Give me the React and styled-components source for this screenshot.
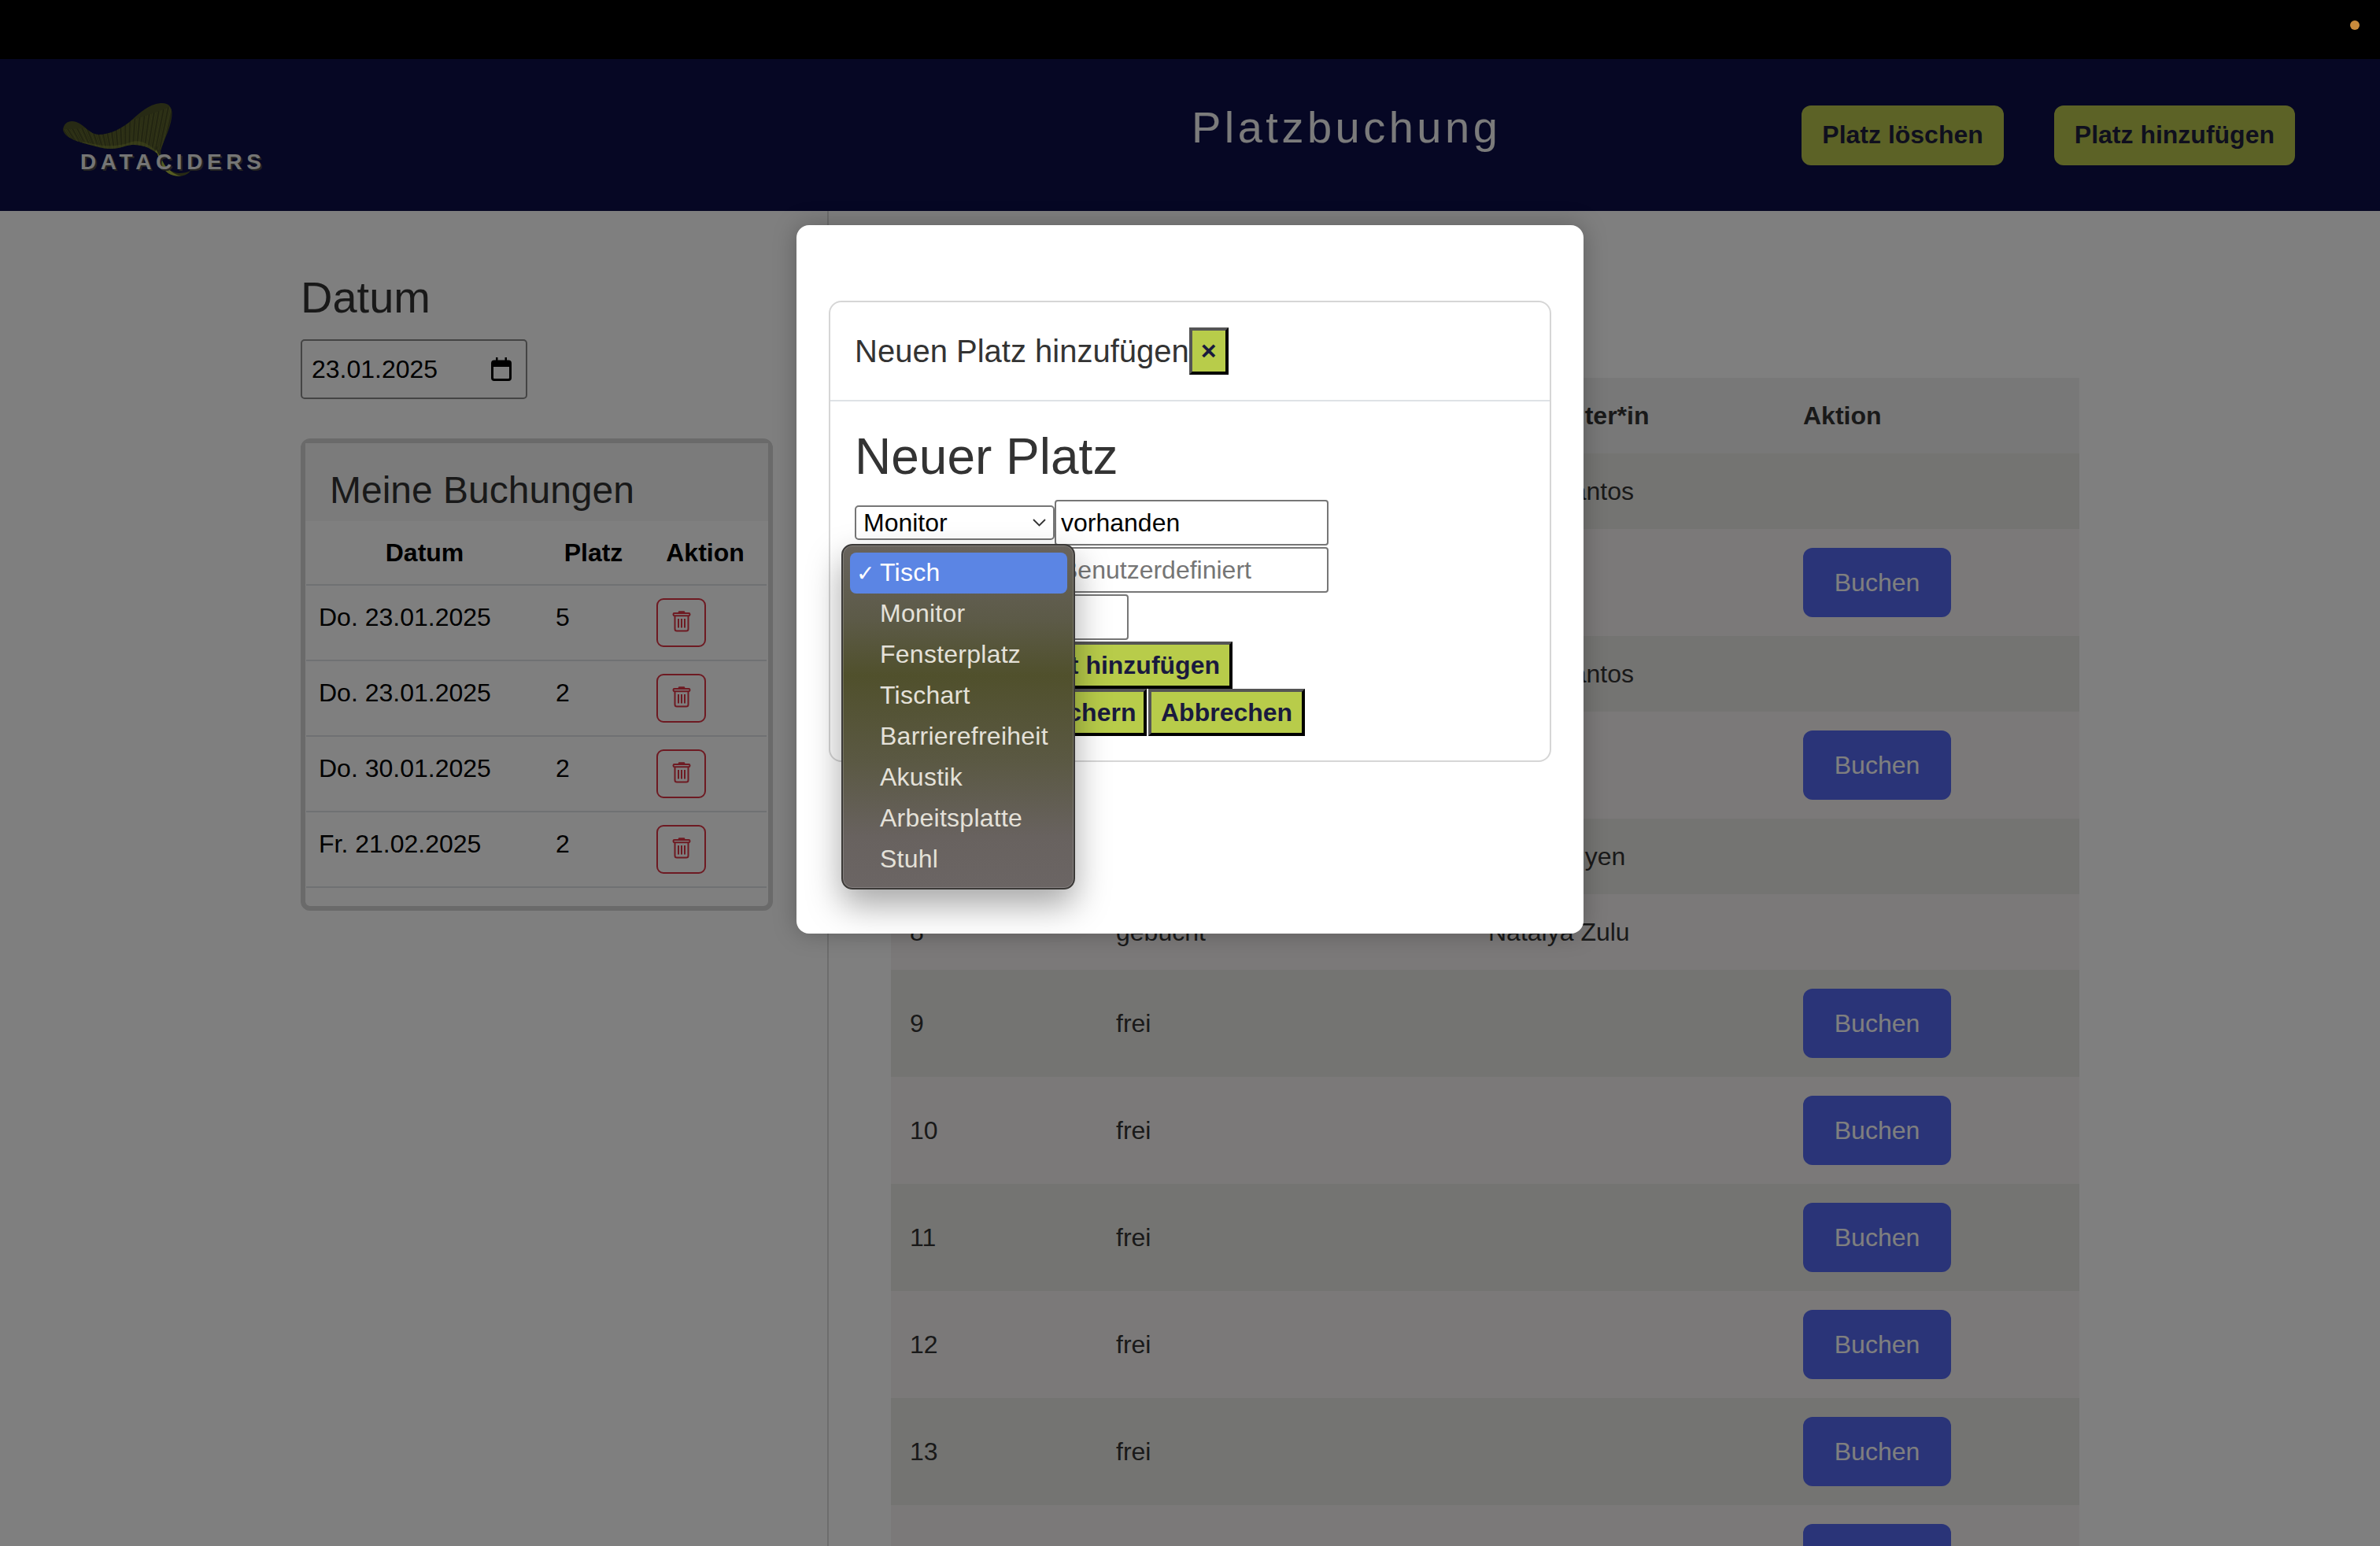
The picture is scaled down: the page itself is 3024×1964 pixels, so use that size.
import React from 'react'
import styled, { createGlobalStyle } from 'styled-components'

const GlobalStyle = createGlobalStyle`
  html, body {
    margin: 0;
    background: #fff;
  }
  body {
    width: 3024px;
    height: 1964px;
    overflow: hidden;
    font-family: "Liberation Sans", Arial, sans-serif;
    color: #333;
  }
  * {
    box-sizing: border-box;
  }
`

const Page = styled.div`
  position: relative;
  width: 3024px;
  height: 1964px;
  overflow: hidden;
  background: #fff;
`

const TopBar = styled.div`
  height: 75px;
  background: #000;
  display: flex;
  justify-content: flex-end;
  align-items: center;
  padding: 0 26px 11px 0;
`

const StatusDot = styled.span`
  width: 12px;
  height: 12px;
  border-radius: 50%;
  background: #c98b3c;
`

const Nav = styled.header`
  height: 193px;
  background: #0d0f48;
  display: flex;
  align-items: center;
  padding: 0 108px 0 80px;
`

const Logo = styled.div`
  position: relative;
  width: 256px;
  height: 95px;
  margin-top: 12px;
  margin-right: auto;
`

const LogoText = styled.span`
  position: absolute;
  left: 22px;
  top: 62px;
  font-size: 28px;
  line-height: 28px;
  font-weight: 700;
  letter-spacing: 5.6px;
  color: #eaeaea;
  text-shadow: 2px 2px 0 #444;
`

const NavTitle = styled.h1`
  margin: 0 382px 20px 0;
  font-size: 56px;
  font-weight: 400;
  line-height: 67px;
  letter-spacing: 4.5px;
  color: #f6f6f6;
`

const NavActions = styled.div`
  display: flex;
  gap: 64px;
`

const NavButton = styled.button`
  height: 76px;
  padding: 0 26px;
  border: 0;
  border-radius: 12px;
  background: #b8c44c;
  color: #1f1f3d;
  font: 700 32px "Liberation Sans", Arial, sans-serif;
`

const Content = styled.div`
  display: flex;
  height: 1696px;
`

const Aside = styled.aside`
  width: 1051px;
  padding: 76px 0 0 382px;
`

const DateHeading = styled.h2`
  margin: 0 0 20px;
  font-size: 56px;
  line-height: 67px;
  font-weight: 400;
  color: #333;
`

const DateField = styled.div`
  width: 288px;
  height: 76px;
  display: flex;
  align-items: center;
  justify-content: space-between;
  padding: 0 18px 0 12px;
  border: 2px solid #888;
  border-radius: 5px;
  font-size: 32px;
  color: #000;
`

const BookingCard = styled.section`
  width: 600px;
  height: 600px;
  margin-top: 50px;
  border: 6px solid #d4d4d4;
  border-radius: 12px;
`

const BookingHeader = styled.div`
  height: 99px;
  padding: 31px 31px 0;
  background: #f7f7f7;
`

const BookingTitle = styled.h3`
  margin: 0;
  font-size: 48px;
  line-height: 58px;
  font-weight: 400;
  color: #333;
`

const BookingTable = styled.table`
  width: 585px;
  margin: 0 1px;
  border-collapse: collapse;
  table-layout: fixed;
  color: #000;
  font-size: 32px;
  line-height: 48px;
`

const BookingHead = styled.th`
  width: ${(p) => p.$width}px;
  padding: 16px;
  font-weight: 700;
  text-align: center;
  border-bottom: 2px solid #dee2e6;
`

const BookingCell = styled.td`
  padding: 16px;
  vertical-align: top;
  border-bottom: 2px solid #dee2e6;
`

const TrashButton = styled.button`
  display: flex;
  justify-content: center;
  width: 63px;
  height: 62px;
  padding: 13px 0 0;
  background: transparent;
  border: 2px solid #dc3545;
  border-radius: 9px;
  color: #dc3545;
`

const Main = styled.main`
  flex: 1;
  padding: 212px 0 0 79px;
  border-left: 2px solid #dadada;
`

const SeatTable = styled.table`
  width: 1510px;
  border-collapse: collapse;
  table-layout: fixed;
  font-size: 32px;
  line-height: 48px;
  color: #333;
  thead tr {
    background: #f0f0f0;
  }
  tbody tr:nth-child(odd) {
    background: #e9e8e4;
  }
  tbody tr:nth-child(even) {
    background: #f6f3f3;
  }
`

const SeatHead = styled.th`
  width: ${(p) => p.$width}px;
  padding: 24px;
  text-align: left;
  font-weight: 700;
`

const SeatCell = styled.td`
  padding: 24px;
  vertical-align: middle;
`

const BookButton = styled.button`
  display: block;
  width: 188px;
  height: 88px;
  border: 0;
  border-radius: 12px;
  background: #5468f0;
  color: #fff;
  font: 400 32px "Liberation Sans", Arial, sans-serif;
`

const Backdrop = styled.div`
  position: absolute;
  inset: 75px 0 0 0;
  background: rgba(0, 0, 0, 0.5);
  display: flex;
  justify-content: center;
  align-items: flex-start;
  padding-top: 211px;
`

const Modal = styled.div`
  width: 1000px;
  height: 900px;
  padding: 96px 41px 0;
  background: #fff;
  border-radius: 16px;
  box-shadow: 0 0 30px rgba(0, 0, 0, 0.25);
`

const FormCard = styled.div`
  height: 586px;
  border: 2px solid #d6d6d6;
  border-radius: 16px;
`

const FormCardHeader = styled.div`
  display: flex;
  align-items: center;
  height: 126px;
  padding: 0 31px;
  border-bottom: 2px solid #dee2e6;
`

const FormCardTitle = styled.h5`
  margin: 0;
  font-size: 40px;
  line-height: 48px;
  font-weight: 400;
  color: #333;
`

const BevelButton = styled.button`
  height: 60px;
  padding: 0 12px;
  border-style: solid;
  border-width: 4px;
  border-color: #555 #000 #000 #555;
  background: #b8cc4a;
  color: #1a1a3e;
  font: 700 32px "Liberation Sans", Arial, sans-serif;
  white-space: nowrap;
  width: ${(p) => (p.$width ? `${p.$width}px` : 'auto')};
  text-align: ${(p) => (p.$width ? 'right' : 'center')};
`

const CloseButton = styled(BevelButton)`
  width: 50px;
  padding: 0 0 2px;
  font-size: 34px;
  line-height: 1;
  text-align: center;
`

const FormBody = styled.div`
  padding: 32px 31px 0;
`

const FormHeading = styled.h2`
  margin: 0 0 16px;
  font-size: 64px;
  line-height: 77px;
  font-weight: 400;
  color: #333;
`

const FormStack = styled.div`
  display: flex;
  flex-direction: column;
  align-items: flex-start;
  gap: 2px;
`

const FieldRow = styled.div`
  display: flex;
  align-items: center;
`

const SelectWrap = styled.div`
  position: relative;
`

const SelectField = styled.div`
  display: flex;
  align-items: center;
  justify-content: space-between;
  width: 254px;
  height: 44px;
  padding: 0 9px 0 9px;
  border: 2px solid #767676;
  border-radius: 5px;
  background: #fff;
  color: #000;
  font-size: 32px;
`

const TextInput = styled.input`
  width: ${(p) => p.$width}px;
  height: 58px;
  padding: 0 6px;
  border: 2px solid #767676;
  border-radius: 4px;
  background: #fff;
  color: #000;
  font: 400 32px "Liberation Sans", Arial, sans-serif;
  &::placeholder {
    color: #757575;
  }
`

const ButtonStack = styled.div`
  display: flex;
  flex-direction: column;
  align-items: flex-start;
`

const ButtonRow = styled.div`
  display: flex;
  gap: 2px;
`

const Popup = styled.ul`
  position: absolute;
  top: 49px;
  left: -17px;
  z-index: 2;
  width: 297px;
  height: 439px;
  margin: 0;
  padding: 9px 8px 0 9px;
  list-style: none;
  border: 2px solid #3c3a38;
  border-radius: 14px;
  background: linear-gradient(#68635d 0%, #5c5a47 22%, #50502c 38%, #5a5842 62%, #68625f 85%, #6b6564 100%);
  box-shadow: inset 0 0 0 1px rgba(255, 255, 255, 0.18), 0 20px 44px rgba(0, 0, 0, 0.35);
`

const PopupItem = styled.li`
  position: relative;
  height: 52px;
  padding-left: 38px;
  border-radius: 8px;
  font-size: 32px;
  line-height: 50px;
  letter-spacing: 0.25px;
  color: ${(p) => (p.$selected ? '#fff' : '#e4e1d9')};
  background: ${(p) => (p.$selected ? '#5b85e4' : 'transparent')};
`

const CheckMark = styled.span`
  position: absolute;
  left: 8px;
  top: 2px;
  font-family: "DejaVu Sans", sans-serif;
  font-size: 28px;
`

const LogoMark = () => {
  const lines = Array.from({ length: 70 }, (_, i) => {
    const t = i / 69
    return (
      <line
        key={i}
        x1={t * 140}
        y1={34 - 30 * t * t}
        x2={16 + t * 112}
        y2={i % 2 ? 60 : 56}
        stroke={i % 3 ? '#6d7432' : '#3c4120'}
        strokeWidth="0.7"
      />
    )
  })
  return (
    <svg width="256" height="95" viewBox="0 0 256 95">
      <defs>
        <clipPath id="logoClip">
          <path d="M0 35C1 25 9 22 17 25C28 29 33 40 45 41C60 41 76 33 88 22C98 13 108 3 124 1C136 0 140 8 138 20C136 35 128 47 124 62C125 75 130 85 142 89C147 91 156 90 162 87C158 93 150 95 141 93C130 91 124 80 120 65C105 54 92 52 78 56C66 60 55 60 42 56C28 52 3 48 0 35Z" />
        </clipPath>
      </defs>
      <g clipPath="url(#logoClip)">
        <rect width="256" height="95" fill="#4e5428" />
        {lines}
        <path d="M25 50C50 56 66 58 88 50C100 47 112 55 120 64L126 95L0 95Z" fill="#8f9a3c" opacity="0.45" />
        <path d="M118 60C126 72 130 88 150 94L110 95Z" fill="#aab844" />
      </g>
    </svg>
  )
}

const CalendarIcon = () => (
  <svg width="26" height="30" viewBox="0 0 26 30">
    <rect x="1.5" y="5" width="23" height="23.5" rx="2.5" fill="none" stroke="#000" strokeWidth="3" />
    <rect x="1.5" y="5" width="23" height="7" fill="#000" />
    <rect x="6" y="0" width="2.5" height="6" fill="#000" />
    <rect x="17.5" y="0" width="2.5" height="6" fill="#000" />
  </svg>
)

const TrashIcon = () => (
  <svg width="24" height="28" viewBox="0 0 24 28" fill="none" stroke="currentColor" strokeWidth="2">
    <path d="M9 2.5h6" strokeWidth="2.5" strokeLinecap="round" />
    <rect x="1.5" y="4" width="21" height="3.2" rx="1.4" />
    <path d="M3.5 7.5V24a2.5 2.5 0 0 0 2.5 2.5h12a2.5 2.5 0 0 0 2.5-2.5V7.5" />
    <path d="M8 11v11.5M12 11v11.5M16 11v11.5" />
  </svg>
)

const Chevron = () => (
  <svg width="17" height="10" viewBox="0 0 17 10" fill="none" stroke="#333" strokeWidth="1.8">
    <path d="M1 1l7.5 7.5L16 1" />
  </svg>
)

const bookings = [
  ['Do. 23.01.2025', '5'],
  ['Do. 23.01.2025', '2'],
  ['Do. 30.01.2025', '2'],
  ['Fr. 21.02.2025', '2'],
]

const seats = [
  [3, 'gebucht', 'Clara Santos'],
  [4, 'frei', ''],
  [5, 'gebucht', 'Clara Santos'],
  [6, 'frei', ''],
  [7, 'gebucht', 'Thu Nguyen'],
  [8, 'gebucht', 'Natalya Zulu'],
  [9, 'frei', ''],
  [10, 'frei', ''],
  [11, 'frei', ''],
  [12, 'frei', ''],
  [13, 'frei', ''],
  [14, 'frei', ''],
]

const attributes = ['Tisch', 'Monitor', 'Fensterplatz', 'Tischart', 'Barrierefreiheit', 'Akustik', 'Arbeitsplatte', 'Stuhl']

export default function App() {
  return (
    <Page>
      <GlobalStyle />
      <TopBar>
        <StatusDot />
      </TopBar>
      <Nav>
        <Logo>
          <LogoMark />
          <LogoText>DATACIDERS</LogoText>
        </Logo>
        <NavTitle>Platzbuchung</NavTitle>
        <NavActions>
          <NavButton>Platz löschen</NavButton>
          <NavButton>Platz hinzufügen</NavButton>
        </NavActions>
      </Nav>

      <Content>
        <Aside>
          <DateHeading>Datum</DateHeading>
          <DateField>
            23.01.2025
            <CalendarIcon />
          </DateField>
          <BookingCard>
            <BookingHeader>
              <BookingTitle>Meine Buchungen</BookingTitle>
            </BookingHeader>
            <BookingTable>
              <thead>
                <tr>
                  <BookingHead $width={301}>Datum</BookingHead>
                  <BookingHead $width={128}>Platz</BookingHead>
                  <BookingHead $width={156}>Aktion</BookingHead>
                </tr>
              </thead>
              <tbody>
                {bookings.map(([date, seat], i) => (
                  <tr key={i}>
                    <BookingCell>{date}</BookingCell>
                    <BookingCell>{seat}</BookingCell>
                    <BookingCell>
                      <TrashButton>
                        <TrashIcon />
                      </TrashButton>
                    </BookingCell>
                  </tr>
                ))}
              </tbody>
            </BookingTable>
          </BookingCard>
        </Aside>

        <Main>
          <SeatTable>
            <thead>
              <tr>
                <SeatHead $width={262}>Platz</SeatHead>
                <SeatHead $width={473}>Status</SeatHead>
                <SeatHead $width={400}>Mitarbeiter*in</SeatHead>
                <SeatHead $width={375}>Aktion</SeatHead>
              </tr>
            </thead>
            <tbody>
              {seats.map(([nr, status, name]) => (
                <tr key={nr}>
                  <SeatCell>{nr}</SeatCell>
                  <SeatCell>{status}</SeatCell>
                  <SeatCell>{name}</SeatCell>
                  <SeatCell>{status === 'frei' && <BookButton>Buchen</BookButton>}</SeatCell>
                </tr>
              ))}
            </tbody>
          </SeatTable>
        </Main>
      </Content>

      <Backdrop>
        <Modal>
          <FormCard>
            <FormCardHeader>
              <FormCardTitle>Neuen Platz hinzufügen</FormCardTitle>
              <CloseButton>×</CloseButton>
            </FormCardHeader>
            <FormBody>
              <FormHeading>Neuer Platz</FormHeading>
              <FormStack>
                <FieldRow>
                  <SelectWrap>
                    <SelectField>
                      Monitor
                      <Chevron />
                    </SelectField>
                    <Popup>
                      {attributes.map((a, i) => (
                        <PopupItem key={a} $selected={i === 0}>
                          {i === 0 && <CheckMark>✓</CheckMark>}
                          {a}
                        </PopupItem>
                      ))}
                    </Popup>
                  </SelectWrap>
                  <TextInput $width={348} defaultValue="vorhanden" />
                </FieldRow>
                <FieldRow>
                  <SelectField>Tisch</SelectField>
                  <TextInput $width={348} placeholder="Benutzerdefiniert" />
                </FieldRow>
                <FieldRow>
                  <TextInput $width={348} />
                </FieldRow>
                <ButtonStack>
                  <BevelButton $width={480}>Weiteres Attribut hinzufügen</BevelButton>
                  <ButtonRow>
                    <BevelButton $width={371}>Neuen Platz speichern</BevelButton>
                    <BevelButton>Abbrechen</BevelButton>
                  </ButtonRow>
                </ButtonStack>
              </FormStack>
            </FormBody>
          </FormCard>
        </Modal>
      </Backdrop>
    </Page>
  )
}
